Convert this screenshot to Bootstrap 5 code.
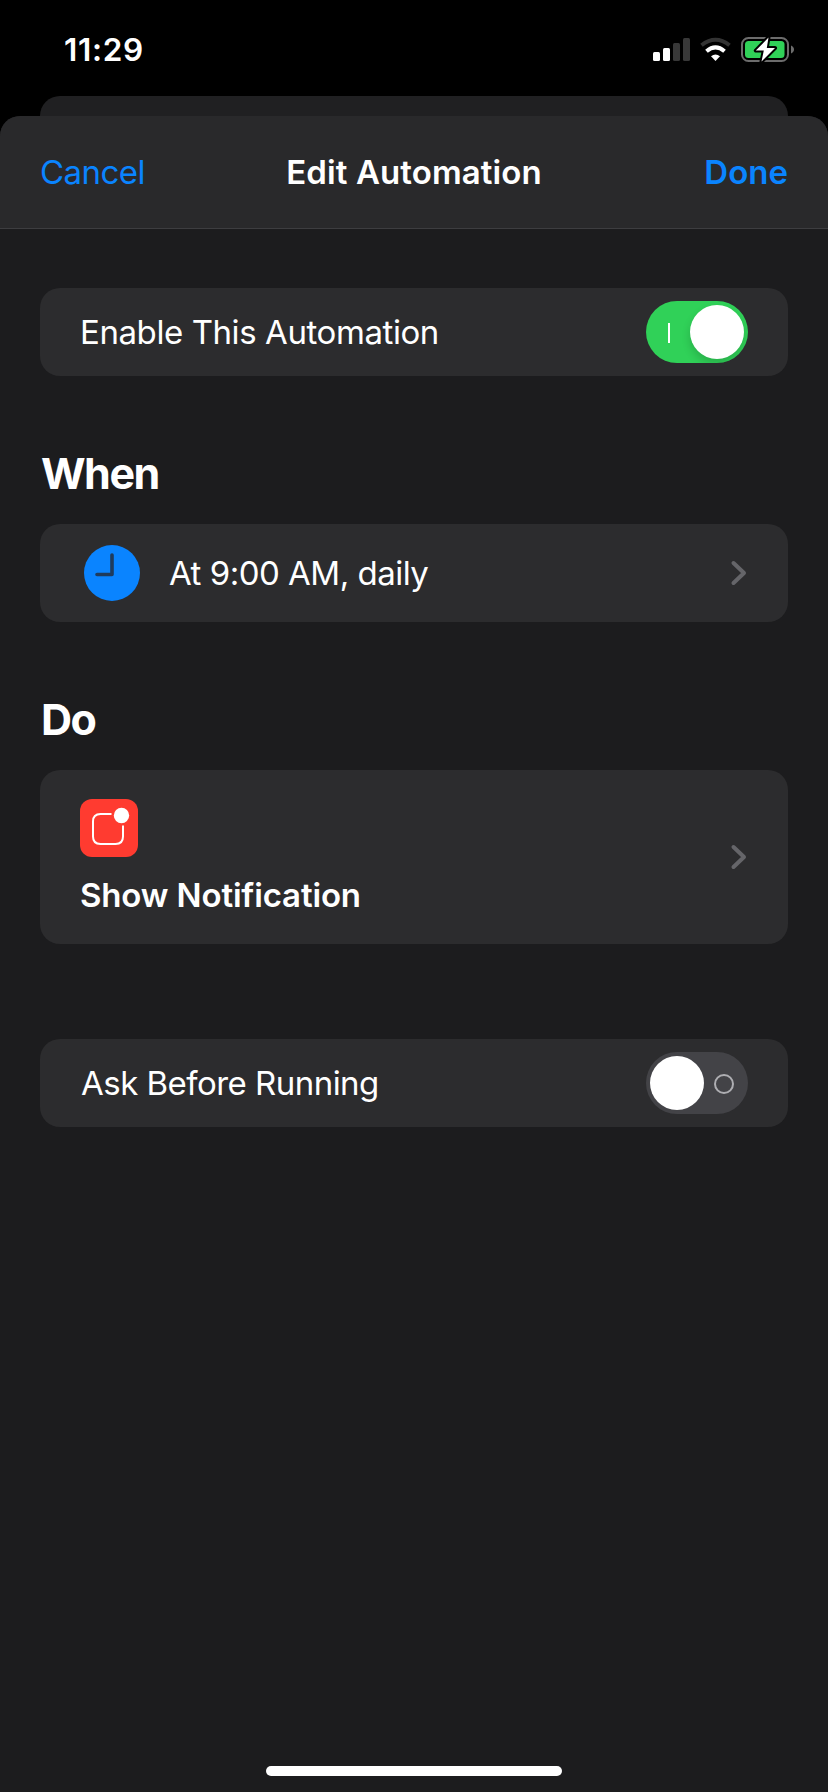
<!DOCTYPE html>
<html lang="en" data-bs-theme="dark">
<head>
<meta charset="utf-8">
<meta name="viewport" content="width=device-width, initial-scale=1">
<title>Edit Automation</title>
<link href="https://cdn.jsdelivr.net/npm/bootstrap@5.3.0/dist/css/bootstrap.min.css" rel="stylesheet">
<style>
  body { background: #000; color: #fff; font-family: Inter, "Liberation Sans", sans-serif; font-size: 33px; line-height: 40px; }
  .screen { width: 828px; height: 1792px; }
  .status { height: 96px; padding: 0 34px 0 64px; }
  .clock-time { font-size: 31.5px; font-weight: 600; line-height: 100px; height: 100px; letter-spacing: .65px; }
  .status svg { margin-top: 36px; }
  .sheet-behind { height: 20px; margin: 0 40px; background: #202022; border-radius: 20px 20px 0 0; }
  .sheet { background: #1c1c1e; border-radius: 20px 20px 0 0; }
  .sheet-head { height: 113px; background: #29292b; border-bottom: 1px solid #3d3d40; border-radius: 20px 20px 0 0; padding: 0 40px; }
  .bar-btn { color: #0a84ff; font-size: 33px; line-height: 40px; text-decoration: none; }
  .btn-cancel { letter-spacing: -.55px; }
  .title { font-size: 33px; line-height: 40px; font-weight: 600; letter-spacing: .1px; }
  .sheet-body { padding: 59px 40px 0; }
  .cell { background: #2c2c2e; border: 0; border-radius: 20px; padding: 0 40px; color: #fff; }
  .cell-toggle { height: 88px; }
  .cell-when { height: 98px; margin-top: 25px; }
  .cell-do { height: 174px; margin-top: 25px; }
  .label-enable { letter-spacing: -.42px; }
  .label-time { padding-left: 29px; letter-spacing: -.5px; }
  .label-action { margin-top: 18px; letter-spacing: -.15px; }
  .label-ask { padding-left: 1px; letter-spacing: -.53px; }
  .section-title { font-size: 43px; line-height: 52px; font-weight: 700; padding-left: 1px; margin: 71px 0 0; letter-spacing: -1.5px; }
  .ask { margin-top: 95px; }
  .home { width: 296px; height: 10px; background: #fff; margin-bottom: 16px; }
</style>
</head>
<body>
<div class="screen d-flex flex-column overflow-hidden">
  <div class="status d-flex justify-content-between flex-shrink-0">
    <span class="clock-time">11:29</span>
    <svg width="142" height="28" viewBox="0 0 142 28" aria-hidden="true">
      <g fill="#fff">
        <rect x="1" y="16" width="7" height="9" rx="1.5"/>
        <rect x="11" y="12" width="7" height="13" rx="1.5"/>
        <rect x="21" y="7" width="7" height="18" rx="1.5" opacity=".22"/>
        <rect x="31" y="2" width="7" height="23" rx="1.5" opacity=".22"/>
      </g>
      <g fill="none" stroke="#fff" stroke-width="4">
        <path d="M49.5 9.3Q63.5-1.7 77.5 9.3" stroke="#333"/>
        <path d="M54.5 15.2Q63.5 7.4 72.5 15.2"/>
      </g>
      <path d="M59 20.3Q63.500 16.500 68 20.300L63.500 25z" fill="#fff"/>
      <rect x="90" y="2" width="46" height="23" rx="6.5" fill="none" stroke="#6c6c6c" stroke-width="2"/>
      <rect x="93" y="5" width="39.5" height="17" rx="3.5" fill="#30d158"/>
      <path d="M139 9.5c4 1.500 4 6.500 0 8z" fill="#6c6c6c"/>
      <path d="M116.500 1.500L103.800 14.600h8L109.500 25.500 123 12h-8.200z" fill="#fff" stroke="#000" stroke-width="4" stroke-linejoin="round" paint-order="stroke"/>
    </svg>
  </div>
  <div class="sheet-behind flex-shrink-0"></div>
  <main class="sheet flex-grow-1 d-flex flex-column">
    <header class="sheet-head row g-0 align-items-center">
      <div class="col-3"><a href="#" class="bar-btn btn-cancel">Cancel</a></div>
      <div class="col-6 text-center"><span class="title">Edit Automation</span></div>
      <div class="col-3 text-end"><a href="#" class="bar-btn fw-semibold">Done</a></div>
    </header>
    <div class="sheet-body flex-grow-1">
      <div class="cell cell-toggle d-flex align-items-center justify-content-between">
        <span class="label-enable">Enable This Automation</span>
        <svg width="102" height="62" viewBox="0 0 102 62" role="img" aria-label="On">
          <defs><filter id="soft" x="-40%" y="-40%" width="180%" height="180%"><feGaussianBlur stdDeviation="5"/></filter>
          <clipPath id="track"><rect width="102" height="62" rx="31"/></clipPath></defs>
          <rect width="102" height="62" rx="31" fill="#30d158"/>
          <g clip-path="url(#track)"><circle cx="71" cy="36" r="27" opacity=".16" filter="url(#soft)"/></g>
          <rect x="22" y="22" width="2" height="20" fill="#fff"/>
          <circle cx="71" cy="31" r="27" fill="#fff"/>
        </svg>
      </div>
      <h2 class="section-title">When</h2>
      <div class="cell cell-when d-flex align-items-center">
        <svg class="ms-1" width="56" height="56" viewBox="0 0 56 56" aria-hidden="true">
          <circle cx="28" cy="28" r="28" fill="#0a84ff"/>
          <path d="M28 10v19.500H13" fill="none" stroke="#1f3b5c" stroke-width="3.600" stroke-linecap="round" stroke-linejoin="round"/>
        </svg>
        <span class="label-time flex-grow-1">At 9:00 AM, daily</span>
        <svg width="18" height="28" viewBox="0 0 18 28" aria-hidden="true"><path d="M3.500 4l10.500 10L3.500 24" fill="none" stroke="#656569" stroke-width="4" stroke-linecap="round" stroke-linejoin="round"/></svg>
      </div>
      <h2 class="section-title">Do</h2>
      <div class="cell cell-do d-flex align-items-center">
        <div class="flex-grow-1 d-flex flex-column">
          <svg width="58" height="58" viewBox="0 0 58 58" aria-hidden="true">
            <rect width="58" height="58" rx="12" fill="#ff3b30"/>
            <path d="M31.500 15H20.500Q13 15 13 22.500V37.500Q13 45 20.500 45H35.500Q43 45 43 37.500V26.500" fill="none" stroke="#fff" stroke-width="2"/>
            <circle cx="41.500" cy="16.500" r="7.700" fill="#fff"/>
          </svg>
          <span class="label-action fw-semibold">Show Notification</span>
        </div>
        <svg width="18" height="28" viewBox="0 0 18 28" aria-hidden="true"><path d="M3.500 4l10.500 10L3.500 24" fill="none" stroke="#656569" stroke-width="4" stroke-linecap="round" stroke-linejoin="round"/></svg>
      </div>
      <div class="cell cell-toggle ask d-flex align-items-center justify-content-between">
        <span class="label-ask">Ask Before Running</span>
        <svg width="102" height="62" viewBox="0 0 102 62" role="img" aria-label="Off">
          <rect width="102" height="62" rx="31" fill="#434347"/>
          <circle cx="78" cy="32" r="9" fill="none" stroke="#aeaeb2" stroke-width="2"/>
          <circle cx="31" cy="31" r="27" fill="#fff"/>
        </svg>
      </div>
    </div>
    <div class="home rounded-pill mx-auto"></div>
  </main>
</div>
<script src="https://cdn.jsdelivr.net/npm/bootstrap@5.3.0/dist/js/bootstrap.bundle.min.js"></script>
</body>
</html>
